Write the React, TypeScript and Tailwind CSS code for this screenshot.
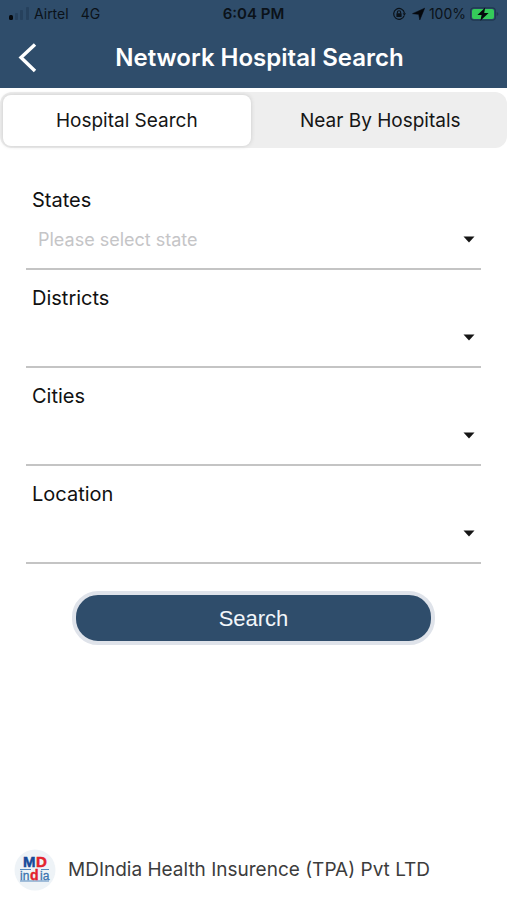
import { useId, useState } from "react";

function StatusBar() {
  return (
    <div className="grid h-7 grid-cols-3 items-center px-2 text-sm text-[#0b1219]">
      <div className="flex items-center">
        <svg className="mr-1 shrink-0" width="22" height="14" viewBox="0 0 22 14" aria-hidden="true">
          <rect x="1" y="8" width="4" height="5" rx="1.5" fill="#05080c" />
          <rect x="7" y="6" width="3" height="7" rx="1" fill="#26415d" />
          <rect x="12" y="3" width="3" height="10" rx="1" fill="#26415d" />
          <rect x="18" y="0" width="3" height="13" rx="1" fill="#26415d" />
        </svg>
        <span>Airtel</span>
        <span className="ml-3">4G</span>
      </div>
      <div className="text-center text-[15px] font-semibold">6:04 PM</div>
      <div className="flex items-center justify-end">
        <svg className="mr-1.5 shrink-0" width="14" height="14" viewBox="0 0 14 14" fill="none" aria-hidden="true">
          <path d="M12.2 8.6A5.4 5.4 0 1 1 12.4 6" stroke="#0b1219" strokeWidth="1.2" />
          <path d="M10.6 6.3h3.4l-1.6 2.4z" fill="#0b1219" />
          <rect x="4.4" y="6.2" width="5.2" height="3.8" rx=".6" fill="#0b1219" />
          <path d="M5.4 6.6V5.3a1.6 1.6 0 0 1 3.2 0v1.3" stroke="#0b1219" strokeWidth="1.1" />
        </svg>
        <svg className="mr-1 shrink-0" width="13" height="14" viewBox="0 0 14 14" aria-hidden="true">
          <path d="M13.6.8 8.4 13.4 7.2 7.4.6 6.6z" fill="#05080c" stroke="#05080c" strokeWidth=".6" />
        </svg>
        <span>100%</span>
        <svg className="ml-1 shrink-0" width="29" height="14" viewBox="0 0 29 14" aria-hidden="true">
          <rect x=".6" y=".8" width="24.8" height="12.4" rx="3.2" fill="none" stroke="#203850" strokeWidth="1.2" />
          <rect x="2" y="2" width="22" height="10" rx="2" fill="#35cb5a" />
          <path d="M26.6 5v4q1.8-.6 1.8-2t-1.8-2z" fill="#203850" />
          <path d="M15.2.4 7.4 8h4.2l-1.2 5.8L18.6 6h-4.4z" fill="#05080c" />
        </svg>
      </div>
    </div>
  );
}

function SelectField({ label, placeholder = "" }: { label: string; placeholder?: string }) {
  const id = useId();
  return (
    <div className="pt-4">
      <label htmlFor={id} className="block px-1.5 text-xl leading-6 text-[#111]">
        {label}
      </label>
      <div className="relative">
        <select
          id={id}
          defaultValue=""
          className="block h-[58px] w-full appearance-none border-b-2 border-[#c4c4c4] bg-transparent pr-8 pl-3 text-lg text-[#c5c5c7] outline-none"
        >
          <option value="">{placeholder}</option>
        </select>
        <svg
          className="pointer-events-none absolute top-6 right-1.5"
          width="12"
          height="7"
          viewBox="0 0 12 7"
          aria-hidden="true"
        >
          <path d="M.5.5h11L6 6.5z" fill="#151515" />
        </svg>
      </div>
    </div>
  );
}

function Logo() {
  return (
    <svg className="shrink-0" width="42" height="42" viewBox="0 0 42 42" role="img" aria-label="MDIndia">
      <circle cx="21" cy="21" r="20.5" fill="#eef3f7" />
      <path d="M6 20.5h11M27 20.5h8M6 32h29" stroke="#5588bd" strokeWidth="1" />
      <g fontFamily="Liberation Sans, Arial, sans-serif" fontWeight="700">
        <text x="9" y="18" fontSize="15" fill="#174a99" stroke="#174a99" strokeWidth=".5">M</text>
        <text x="22" y="18" fontSize="15" fill="#e3222d" stroke="#e3222d" strokeWidth=".5">D</text>
        <text x="6" y="31" fontSize="12" fontWeight="400" fill="#3b74b0" stroke="#3b74b0" strokeWidth=".3">in</text>
        <text x="16" y="31" fontSize="14" fill="#e3222d" stroke="#e3222d" strokeWidth=".4">d</text>
        <text x="26" y="31" fontSize="12" fontWeight="400" fill="#3b74b0" stroke="#3b74b0" strokeWidth=".3">ia</text>
      </g>
    </svg>
  );
}

const tabs = ["Hospital Search", "Near By Hospitals"];

export default function App() {
  const [active, setActive] = useState(0);
  return (
    <div className="flex min-h-screen flex-col bg-white font-['Inter','Liberation_Sans',sans-serif]">
      <header className="bg-[#2f4d6b]">
        <StatusBar />
        <div className="grid h-[60px] grid-cols-[56px_1fr_44px] items-center">
          <button type="button" aria-label="Back" className="flex h-full items-center pl-[18px]">
            <svg width="19" height="30" viewBox="0 0 19 30" fill="none" aria-hidden="true">
              <path d="M17 1.5 3 14.5l14 13.5" stroke="#fff" strokeWidth="3.4" />
            </svg>
          </button>
          <h1 className="text-center text-2xl font-semibold whitespace-nowrap text-white">Network Hospital Search</h1>
        </div>
      </header>

      <div
        role="tablist"
        className="mt-1 grid h-14 grid-cols-2 gap-1.5 rounded-xl bg-[#eeeeee] px-[3px] pt-[3px] pb-0.5 text-[19px] text-[#151515]"
      >
        {tabs.map((tab, i) => (
          <button
            key={tab}
            type="button"
            role="tab"
            aria-selected={active === i}
            onClick={() => setActive(i)}
            className={active === i ? "rounded-lg bg-white pt-0.5 shadow-[0_0_4px_#c8c8c8]" : "rounded-lg pt-0.5"}
          >
            {tab}
          </button>
        ))}
      </div>

      <form className="px-[26px] pt-6" onSubmit={(e) => e.preventDefault()}>
        <SelectField label="States" placeholder="Please select state" />
        <SelectField label="Districts" />
        <SelectField label="Cities" />
        <SelectField label="Location" />
        <div className="px-[46px] pt-[27px]">
          <button
            type="submit"
            className="h-[54px] w-full rounded-[26px] border-4 border-[#dfe3ea] bg-[#2f4d6b] font-['Liberation_Sans',Arial,sans-serif] text-[22px] text-[#f2f6fa]"
          >
            Search
          </button>
        </div>
      </form>

      <footer className="mt-auto flex items-center px-[14px] pb-[9px]">
        <Logo />
        <p className="ml-3 text-[19px] text-[#3c3c3c]">MDIndia Health Insurence (TPA) Pvt LTD</p>
      </footer>
    </div>
  );
}
